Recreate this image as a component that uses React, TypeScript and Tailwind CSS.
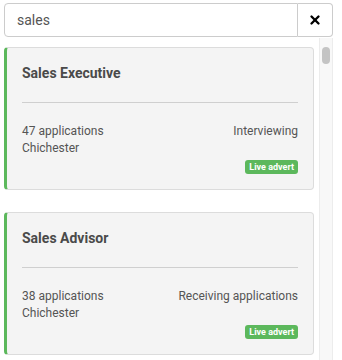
import { X } from 'lucide-react';

interface Job {
  title: string;
  applications: number;
  location: string;
  status: string;
}

const jobs: Job[] = [
  { title: 'Sales Executive', applications: 47, location: 'Chichester', status: 'Interviewing' },
  { title: 'Sales Advisor', applications: 38, location: 'Chichester', status: 'Receiving applications' },
];

function JobCard({ job }: { job: Job }) {
  return (
    <div className="rounded border border-[#dcdcdc] border-l-[3px] border-l-[#5cb85c] bg-[#f4f4f4] px-[15px] pt-[15px] pb-[15px]">
      {/* Title */}
      <h3 className="text-[14px] leading-[20px] font-bold text-[#4a4a4a]">{job.title}</h3>
      <div className="mt-[19px] mb-[20px] h-px bg-[#cfcfcf]" />

      {/* Details */}
      <div className="flex justify-between text-[12px] leading-[17px] text-[#555]">
        <div>
          <p>{job.applications} applications</p>
          <p>{job.location}</p>
        </div>
        <p>{job.status}</p>
      </div>
      <div className="mt-[3px] flex justify-end">
        <span className="rounded-[3px] bg-[#5cb85c] px-[4px] text-[9px] leading-[14px] font-bold text-white">
          Live advert
        </span>
      </div>
    </div>
  );
}

export default function App() {
  return (
    <div className="h-[360px] w-[342px] overflow-hidden bg-white font-['Roboto',sans-serif]">
      <div className="ml-[4px] w-[329px] pt-[3px]">
        {/* Search */}
        <div className="flex h-[34px]">
          <div className="flex flex-1 items-center rounded-l border border-[#cccccc] pl-[12px] text-[14px] text-[#555]">
            sales
          </div>
          <button className="flex w-[35px] items-center justify-center rounded-r border border-l-0 border-[#cccccc] text-black">
            <X size={14} strokeWidth={4} aria-hidden="true" />
          </button>
        </div>

        {/* Results */}
        <div className="flex">
          <div className="flex w-[310px] flex-col gap-[22px] pt-[10px]">
            {jobs.map((job) => (
              <JobCard key={job.title} job={job} />
            ))}
          </div>
          <div className="ml-[5px] mt-[1px] h-[330px] w-[14px] border-x border-[#ececec] bg-[#f8f8f8] pt-[9px]">
            <div className="mx-auto h-[17px] w-[8px] rounded-full bg-[#c4c4c4]" />
          </div>
        </div>
      </div>
    </div>
  );
}
